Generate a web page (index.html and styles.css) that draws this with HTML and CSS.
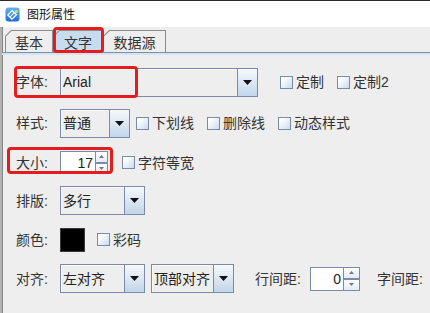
FILE: index.html
```html
<!DOCTYPE html>
<html>
<head>
<meta charset="utf-8">
<link rel="stylesheet" href="styles.css">
</head>
<body>
<div class="window">
  <div class="titlebar">
    <svg class="app-icon" viewBox="0 0 15 15" width="15" height="15">
      <defs>
        <linearGradient id="ig" x1="0" y1="0" x2="0" y2="1">
          <stop offset="0" stop-color="#62b4f6"/>
          <stop offset="1" stop-color="#1f6cd2"/>
        </linearGradient>
      </defs>
      <rect x="0.5" y="0.5" width="14" height="14" rx="3" fill="url(#ig)"/>
      <path d="M2.8 8 L7.2 3.6 L11.4 7.8 L7 12.2 Z" fill="none" stroke="#fff" stroke-width="1.3"/>
      <path d="M4.9 10.1 L9.3 5.7" stroke="#fff" stroke-width="1.1"/>
      <circle cx="11.2" cy="4.6" r="1.6" fill="#e6df4a"/>
    </svg>
    <span class="title">图形属性</span>
  </div>
  <div class="main">
    <div class="tabbar">
      <div class="tab tab-basic"><span>基本</span></div>
      <div class="tab tab-text selected"><span>文字</span></div>
      <div class="tab tab-data"><span>数据源</span></div>
    </div>
    <div class="band"></div>
    <div class="panel">
      <div class="row row-font">
        <span class="label">字体:</span>
        <div class="combo combo-font"><span class="value">Arial</span><span class="arrow"><svg width="9" height="5" viewBox="0 0 9 5"><path d="M0 0H9L4.5 5Z" fill="#111"/></svg></span></div>
        <label class="check check-far"><span class="box"></span><span>定制</span></label>
        <label class="check"><span class="box"></span><span>定制2</span></label>
      </div>
      <div class="row row-style">
        <span class="label">样式:</span>
        <div class="combo combo-style"><span class="value">普通</span><span class="arrow"><svg width="9" height="5" viewBox="0 0 9 5"><path d="M0 0H9L4.5 5Z" fill="#111"/></svg></span></div>
        <label class="check check-near"><span class="box"></span><span>下划线</span></label>
        <label class="check"><span class="box"></span><span>删除线</span></label>
        <label class="check"><span class="box"></span><span>动态样式</span></label>
      </div>
      <div class="row row-size">
        <span class="label">大小:</span>
        <div class="spinner spinner-size">
          <span class="field">17</span>
          <span class="btns">
            <span class="btn"><svg width="5" height="3" viewBox="0 0 5 3"><path d="M0 3H5L2.5 0Z" fill="#777"/></svg></span>
            <span class="btn"><svg width="5" height="3" viewBox="0 0 5 3"><path d="M0 0H5L2.5 3Z" fill="#777"/></svg></span>
          </span>
        </div>
        <label class="check check-mid"><span class="box"></span><span>字符等宽</span></label>
      </div>
      <div class="row row-layout">
        <span class="label">排版:</span>
        <div class="combo combo-mid"><span class="value">多行</span><span class="arrow"><svg width="9" height="5" viewBox="0 0 9 5"><path d="M0 0H9L4.5 5Z" fill="#111"/></svg></span></div>
      </div>
      <div class="row row-color">
        <span class="label">颜色:</span>
        <span class="swatch"></span>
        <label class="check check-mid2"><span class="box"></span><span>彩码</span></label>
      </div>
      <div class="row row-align">
        <span class="label">对齐:</span>
        <div class="combo combo-mid"><span class="value">左对齐</span><span class="arrow"><svg width="9" height="5" viewBox="0 0 9 5"><path d="M0 0H9L4.5 5Z" fill="#111"/></svg></span></div>
        <div class="combo combo-valign"><span class="value">顶部对齐</span><span class="arrow"><svg width="9" height="5" viewBox="0 0 9 5"><path d="M0 0H9L4.5 5Z" fill="#111"/></svg></span></div>
        <span class="inline-label line-gap">行间距:</span>
        <div class="spinner spinner-gap">
          <span class="field">0</span>
          <span class="btns">
            <span class="btn"><svg width="5" height="3" viewBox="0 0 5 3"><path d="M0 3H5L2.5 0Z" fill="#777"/></svg></span>
            <span class="btn"><svg width="5" height="3" viewBox="0 0 5 3"><path d="M0 0H5L2.5 3Z" fill="#777"/></svg></span>
          </span>
        </div>
        <span class="inline-label char-gap">字间距:</span>
      </div>
    </div>
  </div>
  <div class="mark mark-tab"></div>
  <div class="mark mark-font"></div>
  <div class="mark mark-size"></div>
</div>
</body>
</html>
```

FILE: styles.css
```css
* { box-sizing: border-box; }
html, body { margin: 0; padding: 0; }
body {
  width: 430px;
  height: 313px;
  overflow: hidden;
  background: #eeeeee;
  font-family: "Liberation Sans", "Noto Sans CJK SC", sans-serif;
  font-size: 14px;
  color: #333;
}
.window {
  position: relative;
  width: 430px;
  height: 313px;
  overflow: hidden;
  background: #eeeeee;
  display: flex;
  flex-direction: column;
}
.titlebar {
  height: 27px;
  flex: none;
  border-top: 1px solid #2b2b2b;
  background: #ffffff;
  display: flex;
  align-items: center;
  padding-left: 5px;
  gap: 7px;
}
.app-icon { display: block; flex: none; }
.title {
  font-family: "Noto Sans CJK SC", sans-serif;
  font-size: 12px;
  color: #111;
  line-height: 1;
}
.main {
  flex: 1;
  border-left: 2px solid #b2b2b2;
  box-shadow: inset 1px 0 0 #858585;
  display: flex;
  flex-direction: column;
}
.tabbar {
  flex: none;
  display: flex;
  align-items: flex-end;
  height: 26px;
  padding-left: 3px;
  border-bottom: 1px solid #7d8eac;
}
.tab {
  position: relative;
  height: 22px;
  display: flex;
  align-items: center;
  justify-content: center;
  background: #8c8c8c;
  clip-path: polygon(6px 0, 100% 0, 100% 100%, 0 100%, 0 6px);
  font-family: "Noto Sans CJK SC", sans-serif;
  font-size: 14px;
  color: #333;
}
.tab::before {
  content: "";
  position: absolute;
  top: 1px; left: 1px; right: 1px; bottom: 0;
  background: #eeeeee;
  clip-path: polygon(5.6px 0, 100% 0, 100% 100%, 0 100%, 0 5.6px);
}
.tab span { position: relative; line-height: 1; padding-top: 1px; }
.tab.selected::before { background: #c8dcf0; }
.tab-basic { width: 48px; }
.tab-text { width: 50px; }
.tab-data { width: 63px; }
.band {
  flex: none;
  height: 2px;
  background: #d6e4f2;
}
.panel {
  flex: 1;
  padding: 7px 0 0 14px;
  display: flex;
  flex-direction: column;
}
.row {
  display: flex;
  align-items: center;
  height: 39px;
  flex: none;
}
.row-font { height: 40px; }
.row-style { height: 42px; }
.row-size { height: 37px; }
.label {
  width: 44px;
  flex: none;
  line-height: 1;
  color: #333;
}
.combo {
  display: flex;
  height: 29px;
  flex: none;
  border: 1px solid #7a8aa8;
  background: #eeeeee;
  box-shadow: inset 1px 1px 0 #fafafa;
}
.combo .value {
  flex: 1;
  display: flex;
  align-items: center;
  padding-left: 2px;
  line-height: 1;
  color: #222;
}
.combo .arrow {
  width: 20px;
  flex: none;
  border-left: 1px solid #7a8aa8;
  background: linear-gradient(to bottom, #f6f9fc, #c2d5ea);
  display: flex;
  align-items: center;
  justify-content: center;
}
.combo .arrow svg { display: block; }
.combo-font { width: 198px; }
.combo-style { width: 70px; }
.combo-mid { width: 85px; }
.combo-valign { width: 83px; margin-left: 6px; }
.check {
  display: flex;
  align-items: center;
  gap: 3px;
  margin-left: 13px;
  line-height: 1;
  color: #333;
}
.check-far { margin-left: 22px; }
.check-near { margin-left: 6px; }
.check-mid { margin-left: 14px; }
.check-mid2 { margin-left: 12px; }
.box {
  width: 13px;
  height: 13px;
  flex: none;
  border: 1px solid #7a8aa8;
  background: linear-gradient(135deg, #ffffff 20%, #c9dbee 100%);
}
.spinner {
  display: flex;
  height: 23px;
  flex: none;
  border: 1px solid #7a8aa8;
  background: #fff;
}
.spinner .field {
  flex: 1;
  display: flex;
  align-items: center;
  justify-content: flex-end;
  padding-right: 2px;
  line-height: 1;
  color: #222;
}
.spinner .btns {
  flex: none;
  display: flex;
  flex-direction: column;
  border-left: 1px solid #7a8aa8;
}
.spinner .btn {
  flex: 1;
  display: flex;
  align-items: center;
  justify-content: center;
  background: linear-gradient(to bottom, #ffffff, #e3ebf4);
}
.spinner .btn + .btn { border-top: 2px solid #7a8aa8; }
.spinner .btn svg { display: block; }
.spinner-size { width: 48px; }
.spinner-size .btns { width: 12px; }
.spinner-gap { width: 50px; height: 24px; }
.spinner-gap .btns { width: 16px; }
.swatch {
  width: 25px;
  height: 24px;
  flex: none;
  background: #000;
  border: 1px solid #3a3a3a;
}
.inline-label { line-height: 1; color: #333; flex: none; }
.line-gap { margin-left: 21px; width: 55px; }
.char-gap { margin-left: 17px; }
.mark {
  position: absolute;
  border: 3px solid #e41c1e;
  border-radius: 4px;
  pointer-events: none;
}
.mark-tab { left: 53px; top: 27px; width: 51px; height: 26px; }
.mark-font { left: 14px; top: 66px; width: 124px; height: 32px; }
.mark-size { left: 7px; top: 147px; width: 106px; height: 27px; }
```
